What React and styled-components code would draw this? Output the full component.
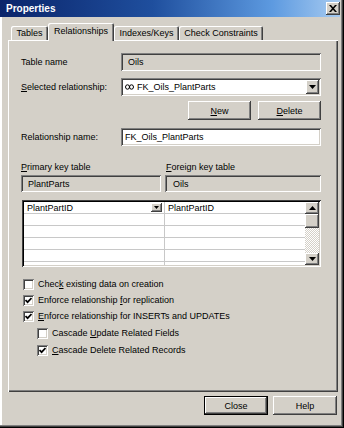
import React from 'react';
import styled, { createGlobalStyle, css } from 'styled-components';

const GlobalStyle = createGlobalStyle`
  html, body { margin: 0; padding: 0; background: #d4d0c8; }
  body { font-family: "Liberation Sans", Arial, sans-serif; font-size: 9px; color: #000; }
  * { box-sizing: border-box; }
`;

const raised = css`
  background: #d4d0c8;
  box-shadow: inset -1px -1px #404040, inset 1px 1px #fff, inset -2px -2px #808080;
`;

const Window = styled.div`
  width: 344px;
  height: 428px;
  display: flex;
  flex-direction: column;
  padding: 0 4px 3px 0;
  background: #d4d0c8;
  box-shadow: inset -1px -1px #000, inset -2px -2px #404040, inset -3px -3px #808080, inset 2px 0 #fff;
`;

const TitleBar = styled.div`
  height: 17px;
  flex: none;
  display: flex;
  align-items: center;
  justify-content: space-between;
  padding-left: 6px;
  background: linear-gradient(90deg, #0a246a 0%, #1f4f9e 45%, #5d9ae0 80%, #a6caf0 100%);
`;

const Title = styled.span`
  color: #fff;
  font-weight: bold;
  font-size: 10px;
`;

const CloseBox = styled.div`
  ${raised};
  width: 14px;
  height: 13px;
  display: flex;
  align-items: center;
  justify-content: center;
`;

const Body = styled.div`
  flex: 1;
  display: flex;
  flex-direction: column;
  padding: 6px 2px 0 8px;
`;

const TabStrip = styled.div`
  position: relative;
  z-index: 1;
  height: 17px;
  display: flex;
  align-items: flex-end;
  padding-left: 3px;
`;

const Tab = styled.div`
  width: ${p => p.$w}px;
  height: ${p => (p.$active ? 18 : 14)}px;
  margin-bottom: ${p => (p.$active ? -1 : 0)}px;
  padding-bottom: ${p => (p.$active ? 2 : 0)}px;
  display: flex;
  align-items: center;
  justify-content: center;
  background: #d4d0c8;
  border-radius: 2px 2px 0 0;
  box-shadow: inset 1px 1px #fff, inset -1px 0 #404040, inset -2px 0 #808080;
  position: relative;
  z-index: ${p => (p.$active ? 2 : 1)};
  white-space: nowrap;
`;

const Panel = styled.div`
  height: 352px;
  flex: none;
  display: flex;
  flex-direction: column;
  padding: 13px 17px 0 13px;
  box-shadow: inset 1px 1px #fff, inset -1px -1px #404040, inset -2px -2px #808080;
`;

const FormRow = styled.div`
  display: grid;
  grid-template-columns: 100px 1fr;
  align-items: center;
  margin-top: ${p => p.$top || 0}px;
`;

const Label = styled.span`
  white-space: nowrap;
`;

const Field = styled.div`
  height: ${p => p.$h || 18}px;
  display: flex;
  align-items: center;
  padding: 2px 2px 2px ${p => p.$pad || 5}px;
  background: ${p => (p.$gray ? '#d4d0c8' : '#fff')};
  box-shadow: inset 1px 1px #808080, inset -1px -1px #fff, inset 2px 2px #404040, inset -2px -2px #d4d0c8;
  white-space: nowrap;
  overflow: hidden;
`;

const ComboText = styled.span`
  flex: 1;
  display: flex;
  align-items: center;
  gap: 3px;
`;

const DropBtn = styled.div`
  ${raised};
  width: ${p => p.$w || 13}px;
  height: ${p => p.$h || 14}px;
  flex: none;
  display: flex;
  align-items: center;
  justify-content: center;
`;

const ButtonRow = styled.div`
  display: flex;
  justify-content: flex-end;
  gap: ${p => p.$gap || 7}px;
  margin-top: ${p => p.$top || 0}px;
  padding-right: ${p => p.$right || 0}px;
`;

const Button = styled.div`
  width: ${p => p.$w || 63}px;
  height: 19px;
  display: flex;
  align-items: center;
  justify-content: center;
  background: #d4d0c8;
  box-shadow: ${p =>
    p.$default
      ? 'inset 0 0 0 1px #000, inset -2px -2px #404040, inset 2px 2px #fff, inset -3px -3px #808080'
      : 'inset -1px -1px #404040, inset 1px 1px #fff, inset -2px -2px #808080'};
`;

const KeyLabels = styled.div`
  display: grid;
  grid-template-columns: 145px 1fr;
  margin-top: 15px;
  height: 11px;
  align-items: center;
`;

const KeyFields = styled.div`
  display: grid;
  grid-template-columns: 140px 1fr;
  gap: 4px;
  margin-top: 3px;
`;

const Grid = styled.div`
  margin: 8px 0 0 1px;
  height: 67px;
  display: flex;
  padding: 2px;
  background: #fff;
  box-shadow: inset 1px 1px #404040, inset -1px -1px #fff, inset 2px 2px #000, inset -2px -2px #d4d0c8;
`;

const Cells = styled.div`
  flex: 1;
  display: flex;
  flex-direction: column;
  overflow: hidden;
`;

const GridRow = styled.div`
  flex: none;
  height: 12px;
  display: grid;
  grid-template-columns: 141px 1fr;
  border-bottom: 1px solid #c8c8c8;
`;

const Cell = styled.div`
  display: flex;
  align-items: center;
  justify-content: space-between;
  padding: 0 2px 0 3px;
  border-right: ${p => (p.$first ? '1px solid #c8c8c8' : 'none')};
  white-space: nowrap;
`;

const Scrollbar = styled.div`
  width: 14px;
  display: flex;
  flex-direction: column;
`;

const ScrollBtn = styled.div`
  ${raised};
  height: ${p => p.$h}px;
  flex: none;
  display: flex;
  align-items: center;
  justify-content: center;
`;

const Track = styled.div`
  flex: 1;
  background: repeating-conic-gradient(#fff 0 25%, #d4d0c8 0 50%) 0 0 / 2px 2px;
`;

const Checks = styled.div`
  display: flex;
  flex-direction: column;
  margin-top: 9px;
`;

const CheckRow = styled.div`
  height: 16px;
  display: flex;
  align-items: center;
  gap: 4px;
  padding-left: ${p => (p.$indent ? 16 : 2)}px;
  margin-top: ${p => (p.$indent ? 1 : 0)}px;
  white-space: nowrap;
`;

const Box = styled.div`
  width: 11px;
  height: 11px;
  flex: none;
  display: flex;
  align-items: center;
  justify-content: center;
  background: #fff;
  box-shadow: inset 1px 1px #808080, inset -1px -1px #fff, inset 2px 2px #404040, inset -2px -2px #d4d0c8;
`;

const Tri = ({ up }) => (
  <svg width="7" height="4" viewBox="0 0 7 4">
    <path d={up ? 'M3.5 0 L7 4 L0 4 Z' : 'M0 0 L7 0 L3.5 4 Z'} fill="#000" />
  </svg>
);

const Check = ({ checked, indent, children }) => (
  <CheckRow $indent={indent}>
    <Box>
      {checked && (
        <svg width="7" height="7" viewBox="0 0 7 7">
          <path d="M0.5 3 L2.6 5.2 L6.5 1" stroke="#000" strokeWidth="1.7" fill="none" />
        </svg>
      )}
    </Box>
    <span>{children}</span>
  </CheckRow>
);

const RelIcon = () => (
  <svg width="9" height="6" viewBox="0 0 9 6">
    <ellipse cx="2.5" cy="3" rx="2" ry="2.2" stroke="#000" strokeWidth="1" fill="none" />
    <ellipse cx="6.5" cy="3" rx="2" ry="2.2" stroke="#000" strokeWidth="1" fill="none" />
  </svg>
);

const tabs = [
  { label: 'Tables', w: 37 },
  { label: 'Relationships', w: 66, active: true },
  { label: 'Indexes/Keys', w: 65 },
  { label: 'Check Constraints', w: 84 },
];

export default function App() {
  return (
    <>
      <GlobalStyle />
      <Window>
        <TitleBar>
          <Title>Properties</Title>
          <CloseBox>
            <svg width="8" height="7" viewBox="0 0 8 7">
              <path d="M0 0 L2 0 L4 2.2 L6 0 L8 0 L5 3.5 L8 7 L6 7 L4 4.8 L2 7 L0 7 L3 3.5 Z" fill="#000" />
            </svg>
          </CloseBox>
        </TitleBar>
        <Body>
          <TabStrip>
            {tabs.map(t => (
              <Tab key={t.label} $w={t.w} $active={t.active}>
                {t.label}
              </Tab>
            ))}
          </TabStrip>
          <Panel>
            <FormRow>
              <Label>Table name</Label>
              <Field $gray $pad={7}>Oils</Field>
            </FormRow>
            <FormRow $top={7}>
              <Label>
                <u>S</u>elected relationship:
              </Label>
              <Field $pad={4}>
                <ComboText>
                  <RelIcon />
                  FK_Oils_PlantParts
                </ComboText>
                <DropBtn>
                  <Tri />
                </DropBtn>
              </Field>
            </FormRow>
            <ButtonRow $top={5}>
              <Button>
                <u>N</u>ew
              </Button>
              <Button>
                <u>D</u>elete
              </Button>
            </ButtonRow>
            <FormRow $top={8}>
              <Label>Relationship name:</Label>
              <Field $pad={4}>FK_Oils_PlantParts</Field>
            </FormRow>
            <KeyLabels>
              <Label>
                <u>P</u>rimary key table
              </Label>
              <Label>
                <u>F</u>oreign key table
              </Label>
            </KeyLabels>
            <KeyFields>
              <Field $gray $h={17} $pad={7}>PlantParts</Field>
              <Field $gray $h={17} $pad={8}>Oils</Field>
            </KeyFields>
            <Grid>
              <Cells>
                <GridRow>
                  <Cell $first>
                    <span>PlantPartID</span>
                    <DropBtn $w={11} $h={9}>
                      <svg width="5" height="3" viewBox="0 0 5 3">
                        <path d="M0 0 L5 0 L2.5 3 Z" fill="#000" />
                      </svg>
                    </DropBtn>
                  </Cell>
                  <Cell>PlantPartID</Cell>
                </GridRow>
                {[0, 1, 2, 3, 4].map(i => (
                  <GridRow key={i}>
                    <Cell $first />
                    <Cell />
                  </GridRow>
                ))}
              </Cells>
              <Scrollbar>
                <ScrollBtn $h={12}>
                  <Tri up />
                </ScrollBtn>
                <ScrollBtn $h={14} />
                <Track />
                <ScrollBtn $h={12}>
                  <Tri />
                </ScrollBtn>
              </Scrollbar>
            </Grid>
            <Checks>
              <Check>
                Chec<u>k</u> existing data on creation
              </Check>
              <Check checked>
                Enforce relationship <u>f</u>or replication
              </Check>
              <Check checked>
                <u>E</u>nforce relationship for INSERTs and UPDATEs
              </Check>
              <Check indent>
                Cascade <u>U</u>pdate Related Fields
              </Check>
              <Check indent checked>
                <u>C</u>ascade Delete Related Records
              </Check>
            </Checks>
          </Panel>
          <ButtonRow $top={4} $gap={5} $right={1}>
            <Button $w={64} $default>
              Close
            </Button>
            <Button $w={64}>Help</Button>
          </ButtonRow>
        </Body>
      </Window>
    </>
  );
}
